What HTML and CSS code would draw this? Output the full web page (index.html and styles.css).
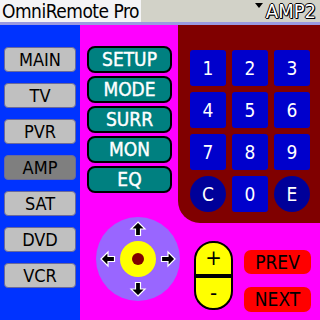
FILE: index.html
```html
<!DOCTYPE html>
<html>
<head>
<meta charset="utf-8">
<link rel="stylesheet" href="styles.css">
</head>
<body>
<div class="screen">
  <div class="titlebar">
    <div class="title">OmniRemote Pro</div>
    <div class="picker"><span class="tri"></span><span class="pick-label">AMP2</span></div>
  </div>
  <div class="main">
    <div class="sidebar">
      <div class="dev">MAIN</div>
      <div class="dev">TV</div>
      <div class="dev">PVR</div>
      <div class="dev dev-active">AMP</div>
      <div class="dev">SAT</div>
      <div class="dev">DVD</div>
      <div class="dev">VCR</div>
    </div>
    <div class="content">
      <div class="top">
        <div class="funcs">
          <div class="func">SETUP</div>
          <div class="func">MODE</div>
          <div class="func">SURR</div>
          <div class="func">MON</div>
          <div class="func">EQ</div>
        </div>
        <div class="panel">
          <div class="keypad">
            <div class="key">1</div><div class="key">2</div><div class="key">3</div>
            <div class="key">4</div><div class="key">5</div><div class="key">6</div>
            <div class="key">7</div><div class="key">8</div><div class="key">9</div>
            <div class="key key-round">C</div><div class="key">0</div><div class="key key-round">E</div>
          </div>
        </div>
      </div>
      <div class="bottom">
        <div class="joy">
          <svg class="joy-svg" width="84" height="84" viewBox="0 0 84 84">
            <circle cx="42" cy="42" r="42" fill="#9966ff"/>
            <circle cx="42" cy="42" r="18" fill="#ffff00"/>
            <circle cx="42" cy="42" r="6" fill="#800000"/>
            <g fill="#000" stroke="#fff" stroke-width="1.2" stroke-linejoin="miter">
              <polygon points="42,5 49,12 44.5,12 44.5,18.5 39.5,18.5 39.5,12 35,12"/>
              <polygon points="42,79 49,72 44.5,72 44.5,65.5 39.5,65.5 39.5,72 35,72"/>
              <polygon points="5,42 12,35 12,39.5 18.5,39.5 18.5,44.5 12,44.5 12,49"/>
              <polygon points="79,42 72,35 72,39.5 65.5,39.5 65.5,44.5 72,44.5 72,49"/>
            </g>
          </svg>
        </div>
        <div class="vol">
          <div class="vol-half">+</div>
          <div class="vol-bar"></div>
          <div class="vol-half">-</div>
        </div>
        <div class="track">
          <div class="trk">PREV</div>
          <div class="trk trk-next">NEXT</div>
        </div>
      </div>
    </div>
  </div>
</div>
</body>
</html>
```
FILE: styles.css
```css
html, body {
  margin: 0;
  padding: 0;
}
body {
  width: 320px;
  height: 320px;
  overflow: hidden;
  font-family: "DejaVu Sans Condensed", "DejaVu Sans", sans-serif;
}
.screen {
  width: 320px;
  height: 320px;
  display: flex;
  flex-direction: column;
}
.titlebar {
  height: 22px;
  border-bottom: 3px solid #9a9ae0;
  background: #d2d2c8;
  display: flex;
  align-items: center;
  justify-content: space-between;
}
.title {
  height: 22px;
  min-width: 140px;
  background: #f4f4f6;
  font-size: 19px;
  line-height: 22px;
  padding: 0 2px 0 2px;
  color: #000;
  box-sizing: border-box;
  white-space: nowrap;
  letter-spacing: -0.5px;
}
.picker {
  display: flex;
  align-items: flex-start;
  height: 22px;
  padding-right: 4px;
}
.tri {
  width: 0;
  height: 0;
  border-left: 4px solid transparent;
  border-right: 4px solid transparent;
  border-top: 5px solid #000;
  margin-top: 3px;
  margin-right: 3px;
}
.pick-label {
  font-size: 20px;
  line-height: 22px;
  color: #fff;
  text-shadow: 1px 0 0 #000, -1px 0 0 #000, 0 1px 0 #000, 0 -1px 0 #000, 1px 1px 0 #000;
}
.main {
  flex: 1;
  display: flex;
}
.sidebar {
  width: 80px;
  background: #0033ff;
  padding: 22px 0 0 4px;
  box-sizing: border-box;
  display: flex;
  flex-direction: column;
  gap: 11px;
}
.dev {
  width: 72px;
  height: 25px;
  box-sizing: border-box;
  background: #c0c0c0;
  border: 1px solid #6a6a9a;
  border-radius: 4px;
  font-size: 18px;
  line-height: 23px;
  text-align: center;
  color: #000;
}
.dev-active {
  background: #7f7f7f;
}
.content {
  width: 240px;
  background: #ff00ff;
  display: flex;
  flex-direction: column;
}
.top {
  display: flex;
  height: 192px;
}
.funcs {
  width: 98px;
  padding: 21px 0 0 7px;
  box-sizing: border-box;
  display: flex;
  flex-direction: column;
  gap: 3px;
}
.func {
  width: 85px;
  height: 27px;
  box-sizing: border-box;
  background: #008080;
  border: 2px solid #000;
  border-radius: 8px;
  color: #fff;
  font-size: 19px;
  line-height: 23px;
  text-align: center;
  -webkit-text-stroke: 0.4px #fff;
}
.panel {
  width: 142px;
  height: 198px;
  background: #800000;
  border-bottom-left-radius: 22px;
  padding: 25px 0 0 12px;
  box-sizing: border-box;
  position: relative;
  z-index: 0;
}
.keypad {
  display: grid;
  grid-template-columns: repeat(3, 36px);
  grid-auto-rows: 36px;
  gap: 6px;
}
.key {
  background: #0000cc;
  border-radius: 3px;
  color: #fff;
  font-size: 19px;
  line-height: 36px;
  text-align: center;
}
.key-round {
  background: #000099;
  border-radius: 50%;
}
.bottom {
  display: flex;
  padding-left: 16px;
  position: relative;
  z-index: 1;
}
.joy {
  width: 84px;
  height: 84px;
}
.joy-svg {
  display: block;
}
.vol {
  margin: 24px 0 0 14px;
  width: 39px;
  height: 69px;
  box-sizing: border-box;
  border: 2px solid #000;
  border-radius: 19px;
  background: #ffff00;
  display: flex;
  flex-direction: column;
  overflow: hidden;
}
.vol-half {
  flex: 1;
  text-align: center;
  font-size: 22px;
  line-height: 30px;
  color: #000;
}
.vol-bar {
  height: 4px;
  background: #000;
}
.track {
  margin: 33px 0 0 11px;
  display: flex;
  flex-direction: column;
  gap: 13px;
}
.trk {
  width: 67px;
  height: 24px;
  background: #ff0000;
  border-radius: 7px;
  font-size: 19px;
  line-height: 24px;
  text-align: center;
  color: #000;
}
.trk-next {
  height: 25px;
}
```
